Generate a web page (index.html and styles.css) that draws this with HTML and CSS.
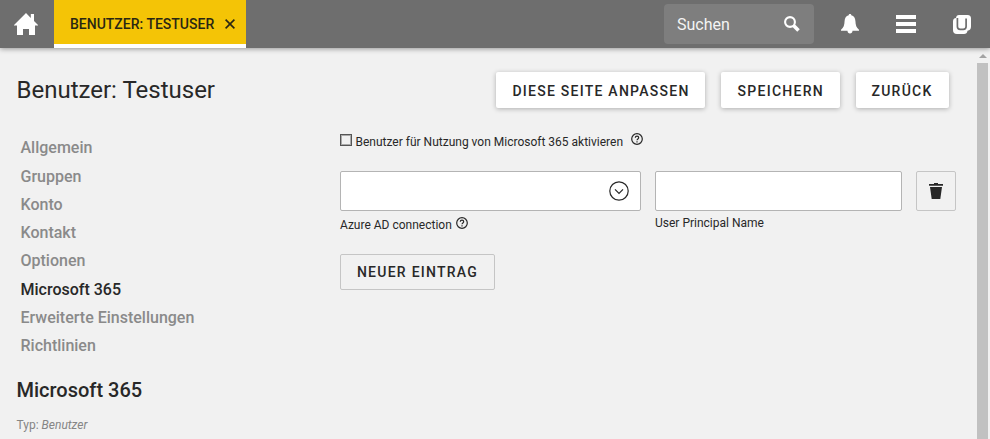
FILE: index.html
```html
<!DOCTYPE html>
<html lang="de">
<head>
<meta charset="utf-8">
<title>Benutzer: Testuser</title>
<link rel="stylesheet" href="styles.css">
</head>
<body>
<header class="topbar">
  <a class="home" aria-label="Start"><svg width="24" height="22" viewBox="0 0 24 22"><path fill="#fff" d="M12 0 16.8 4.900V1H20v7.100l4 4V12.500h-3V22h-6v-6H9v6H3v-9.500H0V12z"/></svg></a>
  <div class="tab"><span class="tab-label">BENUTZER: TESTUSER</span><svg class="close" width="10" height="10" viewBox="0 0 10 10"><path d="M.6.600l8.800 8.800M9.400.6.600 9.400" stroke="#2a2713" stroke-width="1.600"/></svg></div>
  <div class="search"><span>Suchen</span><svg width="16" height="16" viewBox="0 0 16 16"><circle cx="6" cy="6" r="4.900" fill="none" stroke="#fff" stroke-width="2.100"/><path d="M9.300 9.300l5.200 5.200" stroke="#fff" stroke-width="3.600"/></svg></div>
  <svg class="bell" width="18" height="20" viewBox="0 0 18 20"><path fill="#fff" d="M9 0c.8 0 1.300.5 1.300 1.300 2.700.7 3.900 2.800 4.100 5.700.2 4.200.9 6.600 3.600 8.700v1H11.500C11.500 18.500 10.400 19.500 9 19.500s-2.500-1-2.500-2.800H0v-1C2.700 13.600 3.400 11.200 3.600 7c.2-2.900 1.400-5 4.100-5.700C7.700.5 8.200 0 9 0z"/></svg>
  <div class="burger"><i></i><i></i><i></i></div>
  <svg class="brand" width="18" height="19" viewBox="0 0 18 19"><path fill="#fff" d="M6 0h8.500C17 0 18 1.200 18 3.500v8c0 2.500-1.200 4-3.500 4.200-.3 2.200-1.500 3.300-3.500 3.300H4c-2.700 0-4-1.300-4-4V6.500C0 4.300 1 3.200 3 3c.2-2 1.200-3 3-3z"/><path fill="none" stroke="#6e6e6e" stroke-width="1.700" d="M4.400 3v8.600c0 1.900.9 2.800 2.800 2.800h3c1.900 0 2.900-.9 2.900-2.800V3.400"/></svg>
</header>
<div class="page">
  <main class="content">
    <div class="heading">
      <h1>Benutzer: Testuser</h1>
      <div class="actions"><button class="raised adapt">DIESE SEITE ANPASSEN</button><button class="raised save">SPEICHERN</button><button class="raised back">ZURÜCK</button></div>
    </div>
    <div class="columns">
      <aside>
        <nav><a>Allgemein</a><a>Gruppen</a><a>Konto</a><a>Kontakt</a><a>Optionen</a><a class="active">Microsoft 365</a><a>Erweiterte Einstellungen</a><a>Richtlinien</a></nav>
        <h2>Microsoft 365</h2>
        <p class="type">Typ: <em>Benutzer</em></p>
      </aside>
      <section class="form">
        <div class="enable"><span class="checkbox"></span><span class="enable-label">Benutzer für Nutzung von Microsoft 365 aktivieren</span><svg class="help" width="12" height="12" viewBox="0 0 12 12"><circle cx="6" cy="6" r="5.300"/><path d="M4.300 4.800c0-1 .7-1.600 1.700-1.600s1.700.6 1.700 1.500C7.700 5.900 6 6 6 7.300M6 8.200v1.200"/></svg></div>
        <div class="fields">
          <div class="field">
            <div class="input select"><svg width="20" height="20" viewBox="0 0 20 20"><circle cx="10" cy="10" r="9.200"/><path d="M6 8.300l4 4 4-4"/></svg></div>
            <div class="label first">Azure AD connection<svg class="help" width="12" height="12" viewBox="0 0 12 12"><circle cx="6" cy="6" r="5.300"/><path d="M4.300 4.800c0-1 .7-1.600 1.700-1.600s1.700.6 1.700 1.500C7.700 5.900 6 6 6 7.300M6 8.200v1.200"/></svg></div>
          </div>
          <div class="field"><div class="input"></div><div class="label">User Principal Name</div></div>
          <button class="outline trash" aria-label="Entfernen"><svg width="14" height="16" viewBox="0 0 14 16"><path fill="#282828" d="M5 0h4v1h5v1.700H0V1h5zM1 4h12l-1.700 12H2.700z"/></svg></button>
        </div>
        <button class="outline add">NEUER EINTRAG</button>
      </section>
    </div>
  </main>
  <div class="scrollbar"><div class="arrow"></div><div class="thumb"></div></div>
</div>
</body>
</html>
```
FILE: styles.css
```css
* { box-sizing: border-box; }
body { margin: 0; height: 439px; overflow: hidden; display: flex; flex-direction: column; background: #f1f1f1; color: #282828; font-family: Roboto, sans-serif; }
svg { display: block; flex: none; }
button { font: 500 14px/20px Roboto, sans-serif; letter-spacing: 1.25px; color: #282828; padding: 0; margin: 0; }
.topbar { flex: none; position: relative; height: 48px; display: flex; align-items: center; background: #6e6e6e; box-shadow: 0 1px 5px rgba(0,0,0,.38); }
.home { width: 54px; padding-left: 14px; }
.tab { width: 192px; height: 48px; padding: 0 11px 0 16px; display: flex; align-items: center; justify-content: space-between; background: #f4c406; border-bottom: 4px solid #fff; font-size: 14px; font-weight: 500; color: #2a2713; white-space: nowrap; }
.tab-label { padding-top: 4px; }
.close { margin-top: 4px; }
.search { width: 150px; height: 40px; margin-left: 418px; padding: 0 14px 0 13px; display: flex; align-items: center; justify-content: space-between; border-radius: 4px; background: #7e7e7e; color: #f4f4f4; font-size: 16px; }
.bell { margin-left: 27px; }
.burger { width: 20px; height: 18px; margin-left: 37px; display: flex; flex-direction: column; justify-content: space-between; }
.burger i { height: 4px; background: #fff; }
.brand { margin-left: 37px; margin-top: 1px; }
.page { flex: 1; min-height: 0; display: flex; }
.content { width: 977px; padding: 24px 21px 0 16.500px; }
.heading { display: flex; justify-content: space-between; padding-right: 7px; }
h1 { margin: 0; font-size: 24px; line-height: 36px; font-weight: 400; }
.actions { display: flex; gap: 16px; }
.raised { height: 36px; border: 0; border-radius: 2px; background: #fff; box-shadow: 0 1px 5px rgba(0,0,0,.28); padding-top: 2px; }
.adapt { width: 209px; padding-left: 1px; }
.save { width: 119px; padding-left: .5px; }
.back { width: 93px; padding-right: 1px; }
.columns { display: grid; grid-template-columns: 323.500px 616px; }
nav { padding: 26.250px 0 0 4px; display: flex; flex-direction: column; }
nav a { height: 28.300px; line-height: 28.300px; font-size: 16px; font-weight: 500; color: #8a8a8a; }
nav .active { color: #282828; }
h2 { margin: 14.250px 0 0; font-size: 20px; line-height: 30px; font-weight: 500; }
.type { margin: 11px 0 0; font-size: 12px; line-height: 18px; color: #858585; }
.form { padding-top: 25px; }
.enable { display: flex; align-items: flex-start; height: 18px; font-size: 12px; line-height: 18px; }
.checkbox { width: 12px; height: 12px; margin: 1px 3.500px 0 0; border: 1px solid #555; box-shadow: inset 0 0 0 1px #aaa; }
.enable-label { width: 275.500px; }
.help { fill: none; stroke: #282828; stroke-width: 1.200px; }
.fields { display: grid; grid-template-columns: 301px 247px 40px; gap: 14px; margin-top: 20px; align-items: start; }
.input { height: 40px; border: 1px solid #b4b4b4; border-radius: 2px; background: #fff; }
.select { display: flex; align-items: center; justify-content: flex-end; padding-right: 11px; }
.select svg { fill: none; stroke: #282828; stroke-width: 1.200px; }
.label { margin-top: 3px; font-size: 12px; line-height: 18px; }
.first { display: flex; align-items: flex-start; gap: 4px; margin-top: 5px; }
.outline { border: 1px solid #c5c5c5; border-radius: 2px; background: transparent; }
.first .help { margin-top: 1px; }
.trash { width: 40px; height: 40px; display: flex; align-items: center; justify-content: center; }
.add { display: block; width: 155px; height: 36px; margin-top: 20px; }
.scrollbar { width: 13px; padding: 6px 2px 0 0; display: flex; flex-direction: column; align-items: stretch; }
.arrow { align-self: center; width: 0; height: 0; border-left: 4px solid transparent; border-right: 4px solid transparent; border-bottom: 4px solid #a3a3a3; }
.thumb { flex: 1; margin-top: 5px; background: #c1c1c1; }
```
